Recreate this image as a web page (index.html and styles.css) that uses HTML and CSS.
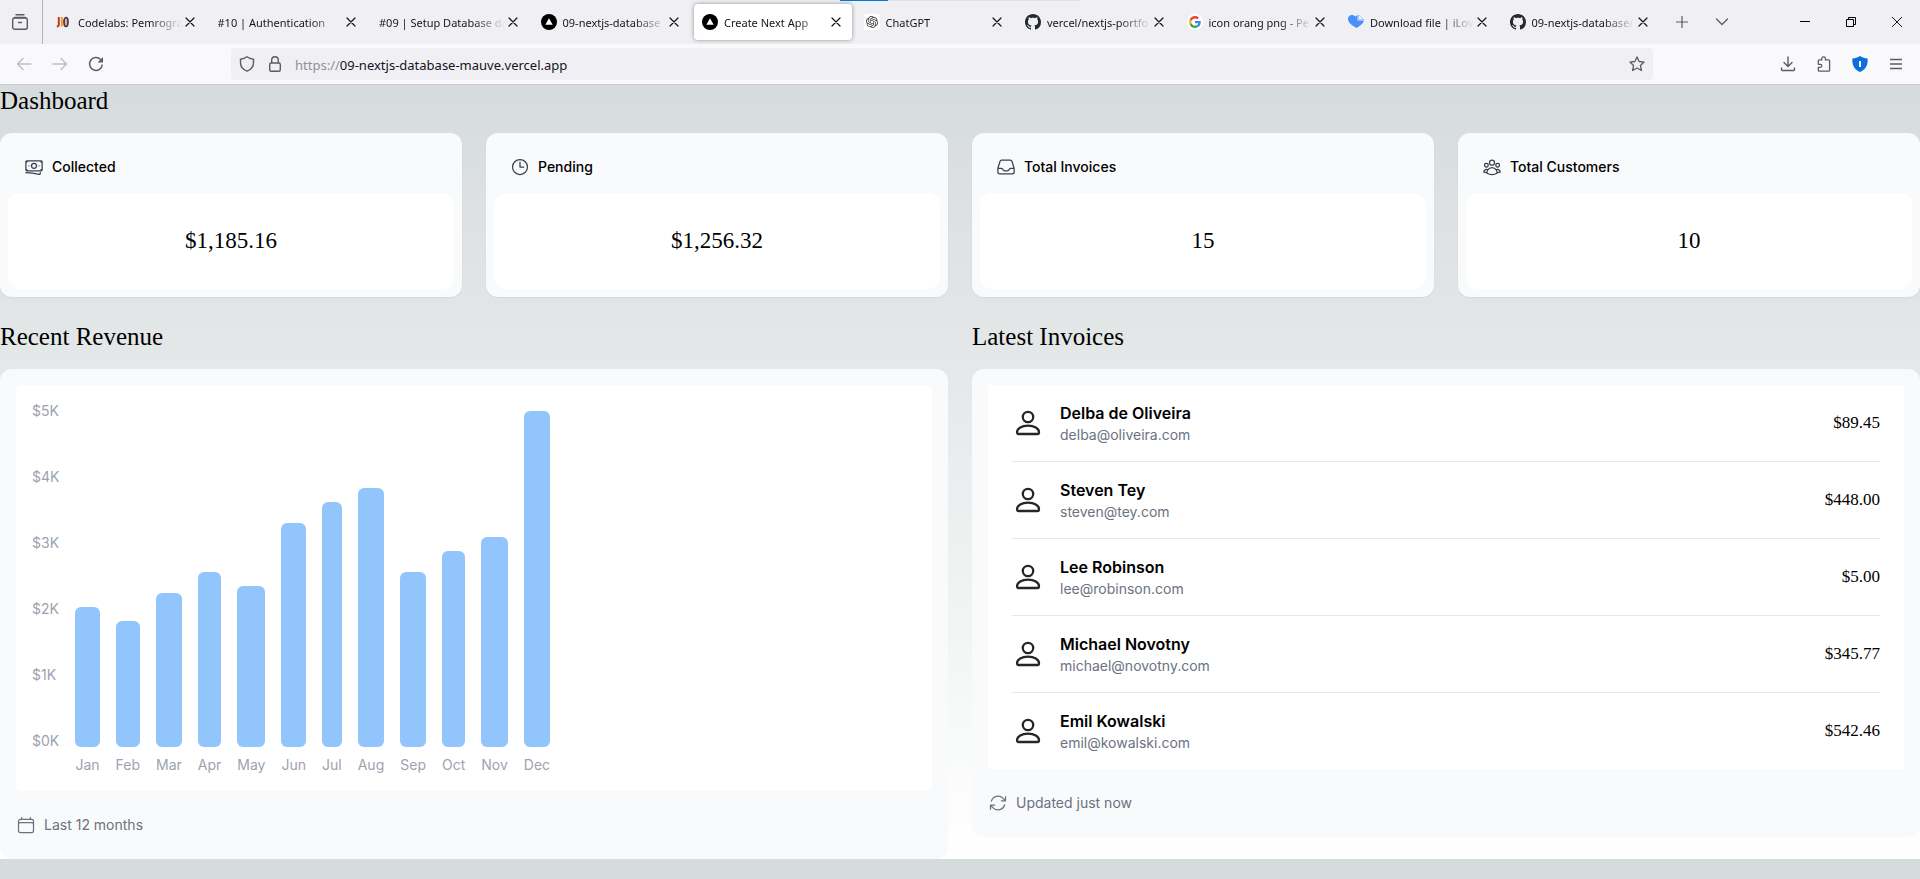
FILE: index.html
```html
<!DOCTYPE html>
<html lang="en">
<head>
<meta charset="utf-8">
<title>Create Next App</title>
<link rel="stylesheet" href="styles.css">
</head>
<body>
<svg class="sprite" aria-hidden="true">
  <symbol id="close" viewBox="0 0 16 16"><path d="M4 4l8 8M12 4l-8 8" fill="none" stroke="currentColor" stroke-width="1.2" stroke-linecap="round"/></symbol>
  <symbol id="vercel" viewBox="0 0 16 16"><circle cx="8" cy="8" r="8"/><path d="M8 4.2l3.7 6.5H4.3z" fill="#fff"/></symbol>
  <symbol id="github" viewBox="0 0 16 16"><path fill="#24292f" d="M8 0C3.58 0 0 3.58 0 8c0 3.54 2.29 6.53 5.47 7.59.4.07.55-.17.55-.38 0-.19-.01-.82-.01-1.49-2.01.37-2.53-.49-2.69-.94-.09-.23-.48-.94-.82-1.13-.28-.15-.68-.52-.01-.53.63-.01 1.08.58 1.23.82.72 1.21 1.87.87 2.33.66.07-.52.28-.87.51-1.07-1.78-.2-3.64-.89-3.64-3.95 0-.87.31-1.59.82-2.15-.08-.2-.36-1.02.08-2.12 0 0 .67-.21 2.2.82.64-.18 1.32-.27 2-.27s1.36.09 2 .27c1.53-1.04 2.2-.82 2.2-.82.44 1.1.16 1.92.08 2.12.51.56.82 1.27.82 2.15 0 3.07-1.87 3.75-3.65 3.95.29.25.54.73.54 1.48 0 1.07-.01 1.93-.01 2.2 0 .21.15.46.55.38A8.01 8.01 0 0 0 16 8c0-4.42-3.58-8-8-8Z"/></symbol>
  <symbol id="person" viewBox="0 0 32 32"><g fill="none" stroke="#262626" stroke-width="2.3"><circle cx="16" cy="10" r="5.2"/><path d="M5 25.300c0-3.900 4.800-6.700 11-6.700s11 2.800 11 6.700c0 1.200-.4 1.700-1.500 1.700h-19c-1.100 0-1.500-.5-1.500-1.700z"/></g></symbol>
</svg>

<header class="browser">
  <div class="tabbar">
    <button class="view" aria-label="Firefox View"><svg width="18" height="18" viewBox="0 0 18 18" fill="none" stroke="#5b5b66" stroke-width="1.4" stroke-linecap="round"><path d="M5 1.700h8M3.500 4.500h11"/><rect x="1.700" y="5" width="14.600" height="11.300" rx="2"/><path d="M7.500 9.500h3"/></svg></button>
    <nav class="tabs" aria-label="Tabs">
      <div class="tab"><svg class="fav" viewBox="0 0 16 16"><path d="M2.800 3v7.500q0 2-2 2" fill="none" stroke="#c0392b" stroke-width="2"/><path d="M5.800 3v9.500" stroke="#f39c12" stroke-width="2"/><ellipse cx="10" cy="8" rx="2" ry="4.500" fill="#f2b25c" stroke="#34336b" stroke-width="1.700"/></svg><button class="title">Codelabs: Pemrogra</button><button class="x" aria-label="Close tab"><svg><use href="#close"/></svg></button></div>
      <div class="tab"><button class="title">#10 | Authentication</button><button class="x" aria-label="Close tab"><svg><use href="#close"/></svg></button></div>
      <div class="tab"><button class="title">#09 | Setup Database da</button><button class="x" aria-label="Close tab"><svg><use href="#close"/></svg></button></div>
      <div class="tab"><svg class="fav"><use href="#vercel"/></svg><button class="title">09-nextjs-database</button><button class="x" aria-label="Close tab"><svg><use href="#close"/></svg></button></div>
      <div class="tab active"><svg class="fav"><use href="#vercel"/></svg><button class="title">Create Next App</button><button class="x" aria-label="Close tab"><svg><use href="#close"/></svg></button></div>
      <div class="tab"><svg class="fav" viewBox="-2 -2 28 28"><rect x="-2" y="-2" width="28" height="28" rx="5" fill="#fff"/><path transform="translate(1.500 1.500) scale(.875)" fill="#333" d="M22.282 9.821a5.985 5.985 0 0 0-.516-4.911 6.046 6.046 0 0 0-6.510-2.900A6.065 6.065 0 0 0 4.981 4.182a5.985 5.985 0 0 0-3.998 2.900 6.046 6.046 0 0 0 .743 7.097 5.980 5.980 0 0 0 .511 4.911 6.051 6.051 0 0 0 6.515 2.900A5.985 5.985 0 0 0 13.260 24a6.056 6.056 0 0 0 5.772-4.206 5.989 5.989 0 0 0 3.998-2.900 6.056 6.056 0 0 0-.748-7.073zm-9.022 12.608a4.476 4.476 0 0 1-2.876-1.041l.142-.080 4.778-2.758a.795.795 0 0 0 .393-.681v-6.737l2.020 1.169a.071.071 0 0 1 .038.052v5.583a4.504 4.504 0 0 1-4.495 4.494zm-9.661-4.125a4.471 4.471 0 0 1-.535-3.014l.142.085 4.783 2.758a.771.771 0 0 0 .781 0l5.843-3.369v2.332a.080.080 0 0 1-.033.062L9.740 19.950a4.499 4.499 0 0 1-6.141-1.646zM2.341 7.896a4.485 4.485 0 0 1 2.366-1.973V11.600a.766.766 0 0 0 .388.677l5.814 3.354-2.020 1.169a.076.076 0 0 1-.071 0l-4.830-2.787A4.504 4.504 0 0 1 2.341 7.872zm16.596 3.856L13.104 8.364 15.119 7.200a.076.076 0 0 1 .071 0l4.830 2.791a4.494 4.494 0 0 1-.677 8.104v-5.677a.790.790 0 0 0-.407-.667zm2.011-3.023l-.142-.085-4.774-2.782a.776.776 0 0 0-.785 0L9.409 9.230V6.897a.066.066 0 0 1 .028-.062l4.830-2.787a4.499 4.499 0 0 1 6.680 4.660zM8.307 12.863l-2.020-1.164a.080.080 0 0 1-.038-.057V6.074a4.499 4.499 0 0 1 7.376-3.454l-.142.081L8.704 5.459a.795.795 0 0 0-.393.681zm1.098-2.365l2.602-1.500 2.607 1.500v2.999l-2.597 1.500-2.607-1.500Z"/></svg><button class="title">ChatGPT</button><button class="x" aria-label="Close tab"><svg><use href="#close"/></svg></button></div>
      <div class="tab"><svg class="fav"><use href="#github"/></svg><button class="title">vercel/nextjs-portfo</button><button class="x" aria-label="Close tab"><svg><use href="#close"/></svg></button></div>
      <div class="tab"><svg class="fav" viewBox="0 0 64 64"><circle cx="32" cy="32" r="32" fill="#fff"/><g transform="translate(8 8)"><path fill="#EA4335" d="M24 9.500c3.540 0 6.710 1.220 9.210 3.600l6.850-6.850C35.900 2.380 30.470 0 24 0 14.620 0 6.510 5.380 2.560 13.220l7.980 6.190C12.430 13.720 17.740 9.500 24 9.500z"/><path fill="#4285F4" d="M46.980 24.550c0-1.570-.15-3.090-.38-4.550H24v9.020h12.940c-.58 2.960-2.260 5.480-4.780 7.180l7.730 6c4.510-4.180 7.090-10.360 7.090-17.650z"/><path fill="#FBBC05" d="M10.530 28.590c-.48-1.450-.76-2.990-.76-4.590s.27-3.140.76-4.590l-7.980-6.190C.92 16.460 0 20.120 0 24c0 3.880.92 7.540 2.560 10.780l7.970-6.190z"/><path fill="#34A853" d="M24 48c6.480 0 11.930-2.130 15.890-5.810l-7.730-6c-2.150 1.450-4.920 2.300-8.160 2.300-6.260 0-11.570-4.220-13.470-9.910l-7.980 6.190C6.510 42.620 14.620 48 24 48z"/></g></svg><button class="title">icon orang png - Pe</button><button class="x" aria-label="Close tab"><svg><use href="#close"/></svg></button></div>
      <div class="tab"><svg class="fav" viewBox="0 0 16 16"><path d="M0 5C0 1 4.500-.5 7.500 2.500L9.500 1v5.500H16c-.5 2.500-4 5.500-7.500 7.500C4 11.500 0 8.500 0 5z" fill="#4a8ffa"/><path d="M10.500 1l5 4.500h-5z" fill="#fff" stroke="#7fb0ff" stroke-width=".7"/></svg><button class="title">Download file | iLov</button><button class="x" aria-label="Close tab"><svg><use href="#close"/></svg></button></div>
      <div class="tab"><svg class="fav"><use href="#github"/></svg><button class="title">09-nextjs-database/</button><button class="x" aria-label="Close tab"><svg><use href="#close"/></svg></button></div>
    </nav>
    <div class="tabtools">
      <button aria-label="New tab"><svg width="16" height="16" viewBox="0 0 16 16" fill="none" stroke="#5b5b66" stroke-width="1.200"><path d="M8 2v12M2 8h12"/></svg></button>
      <button aria-label="List all tabs"><svg width="16" height="16" viewBox="0 0 16 16" fill="none" stroke="#5b5b66" stroke-width="1.300" stroke-linecap="round"><path d="M2.500 5l5.500 5.500L13.500 5"/></svg></button>
    </div>
    <div class="windowtools">
      <button aria-label="Minimize"><svg width="10" height="10" viewBox="0 0 10 10" fill="none" stroke="#000"><path d="M0 4.500h10"/></svg></button>
      <button aria-label="Restore"><svg width="10" height="10" viewBox="0 0 10 10" fill="none" stroke="#000"><path d="M.5 2.500h7v7h-7zM2.500 2.500v-2h7v7h-2"/></svg></button>
      <button aria-label="Close"><svg width="10" height="10" viewBox="0 0 10 10" fill="none" stroke="#000" stroke-width=".9"><path d="M0 0l10 10M10 0L0 10"/></svg></button>
    </div>
    <div class="loadline"></div>
  </div>

  <div class="toolbar">
    <div class="history">
      <button aria-label="Back" disabled><svg width="16" height="16" viewBox="0 0 16 16" fill="none" stroke="#bdbdc4" stroke-width="1.400" stroke-linecap="round" stroke-linejoin="round"><path d="M15 8H1.500M7 2.500L1.500 8 7 13.500"/></svg></button>
      <button aria-label="Forward" disabled><svg width="16" height="16" viewBox="0 0 16 16" fill="none" stroke="#bdbdc4" stroke-width="1.400" stroke-linecap="round" stroke-linejoin="round"><path d="M1 8h13.500M9 2.500L14.500 8 9 13.500"/></svg></button>
      <button aria-label="Reload"><svg width="16" height="16" viewBox="0 0 16 16" fill="none" stroke="#5b5b66" stroke-width="1.500"><path d="M14.300 8.500A6.400 6.400 0 1 1 12.600 3.600"/><path d="M15 1v5.500H9.500z" fill="#5b5b66" stroke="none"/></svg></button>
    </div>
    <div class="urlbar">
      <svg width="16" height="16" viewBox="0 0 16 16" fill="none" stroke="#5b5b66" stroke-width="1.400" stroke-linejoin="round"><path d="M8 .8c2 1.500 4.500 2.200 6.500 2.400v3.300c0 4-2.500 7.200-6.500 8.700-4-1.500-6.500-4.700-6.500-8.700V3.200C3.500 3 6 2.300 8 .8z"/></svg>
      <svg width="16" height="16" viewBox="0 0 16 16" fill="none" stroke="#5b5b66" stroke-width="1.400"><rect x="2.700" y="7" width="10.600" height="8.300" rx="1.500"/><path d="M4.700 7V4a3.300 3.300 0 0 1 6.600 0v3"/></svg>
      <label class="address"><span>https://</span><input type="text" value="09-nextjs-database-mauve.vercel.app" aria-label="Address"></label>
      <button aria-label="Bookmark"><svg width="16" height="16" viewBox="0 0 16 16" fill="none" stroke="#5b5b66" stroke-width="1.300" stroke-linejoin="round"><path d="M8 .9l2.100 4.600 5 .6-3.700 3.400 1 5L8 12l-4.400 2.500 1-5L.9 6.100l5-.6z"/></svg></button>
    </div>
    <div class="extras">
      <button aria-label="Downloads"><svg width="16" height="16" viewBox="0 0 16 16" fill="none" stroke="#5b5b66" stroke-width="1.400" stroke-linecap="round" stroke-linejoin="round"><path d="M8 1v9M4 6.500L8 10.500l4-4M1.500 12v1.500q0 1 1 1h11q1 0 1-1V12"/></svg></button>
      <button aria-label="Extensions"><svg width="16" height="16" viewBox="0 0 16 16" fill="none" stroke="#5b5b66" stroke-width="1.300" stroke-linejoin="round"><path d="M2.300 7V4.800q0-.9.900-.9h2.600V2.600a1.800 1.800 0 0 1 3.600 0v1.300h3.200q1 0 1 1v9.300q0 1-1 1H3.200q-.9 0-.9-.9v-3h2a1.500 1.500 0 0 0 0-3H2.300z"/></svg></button>
      <button aria-label="Bitwarden"><svg width="16" height="16" viewBox="0 0 16 16"><path d="M8 0c2.500 1.700 5 2 7.500 2.500C16.500 9 13 14 8 16 3 14-.5 9 .5 2.500 3 2 5.500 1.700 8 0z" fill="#0c6fde"/><path d="M7 5h2v6H7z" fill="#fff"/></svg></button>
      <button aria-label="Menu"><svg width="16" height="16" viewBox="0 0 16 16" fill="none" stroke="#5b5b66" stroke-width="1.300"><path d="M2 3.500h12M2 8h12M2 12.500h12"/></svg></button>
    </div>
  </div>
</header>

<main class="page">
  <h1 class="heading">Dashboard</h1>
  <section class="cards">
    <article class="card">
      <div class="cardhead"><svg class="icon" viewBox="0 0 24 24"><path d="M2.250 18.750a60.070 60.070 0 0 1 15.797 2.101c.727.198 1.453-.342 1.453-1.096V18.750M3.750 4.500v.75A.75.75 0 0 1 3 6h-.75m0 0v-.375c0-.621.504-1.125 1.125-1.125H20.250M2.250 6v9m18-10.500v.75c0 .414.336.75.75.75h.75m-1.500-1.500h.375c.621 0 1.125.504 1.125 1.125v9.750c0 .621-.504 1.125-1.125 1.125h-.375m1.500-1.500H21a.75.75 0 0 0-.75.75v.75m0 0H3.750m0 0h-.375a1.125 1.125 0 0 1-1.125-1.125V15m1.500 1.500v-.75A.75.75 0 0 0 3 15h-.75M15 10.500a3 3 0 1 1-6 0 3 3 0 0 1 6 0Zm3 0h.008v.008H18V10.500Zm-12 0h.008v.008H6V10.500Z"/></svg><h3>Collected</h3></div>
      <p class="value">$1,185.16</p>
    </article>
    <article class="card">
      <div class="cardhead"><svg class="icon" viewBox="0 0 24 24"><path d="M12 6v6h4.500m4.500 0a9 9 0 1 1-18 0 9 9 0 0 1 18 0Z"/></svg><h3>Pending</h3></div>
      <p class="value">$1,256.32</p>
    </article>
    <article class="card">
      <div class="cardhead"><svg class="icon" viewBox="0 0 24 24"><path d="M2.250 13.500h3.860a2.250 2.250 0 0 1 2.012 1.244l.256.512a2.250 2.250 0 0 0 2.013 1.244h3.218a2.250 2.250 0 0 0 2.013-1.244l.256-.512a2.250 2.250 0 0 1 2.013-1.244h3.859m-19.500.338V18a2.250 2.250 0 0 0 2.250 2.250h15A2.250 2.250 0 0 0 21.750 18v-4.162c0-.224-.034-.447-.1-.661L19.240 5.338a2.250 2.250 0 0 0-2.150-1.588H6.911a2.250 2.250 0 0 0-2.150 1.588L2.350 13.177a2.250 2.250 0 0 0-.1.661Z"/></svg><h3>Total Invoices</h3></div>
      <p class="value">15</p>
    </article>
    <article class="card">
      <div class="cardhead"><svg class="icon" viewBox="0 0 24 24"><path d="M18 18.720a9.094 9.094 0 0 0 3.741-.479 3 3 0 0 0-4.682-2.720m.94 3.198.001.031c0 .225-.012.447-.037.666A11.944 11.944 0 0 1 12 21c-2.170 0-4.207-.576-5.963-1.584A6.062 6.062 0 0 1 6 18.719m12 0a5.971 5.971 0 0 0-.941-3.197m0 0A5.995 5.995 0 0 0 12 12.750a5.995 5.995 0 0 0-5.058 2.772m0 0a3 3 0 0 0-4.681 2.720 8.986 8.986 0 0 0 3.740.477m.94-3.197a5.971 5.971 0 0 0-.94 3.197M15 6.750a3 3 0 1 1-6 0 3 3 0 0 1 6 0Zm6 3a2.250 2.250 0 1 1-4.500 0 2.250 2.250 0 0 1 4.500 0Zm-13.500 0a2.250 2.250 0 1 1-4.500 0 2.250 2.250 0 0 1 4.500 0Z"/></svg><h3>Total Customers</h3></div>
      <p class="value">10</p>
    </article>
  </section>

  <div class="columns">
    <section>
      <h2 class="heading">Recent Revenue</h2>
      <div class="panel">
        <div class="chart">
          <div class="axis"><span>$5K</span><span>$4K</span><span>$3K</span><span>$2K</span><span>$1K</span><span>$0K</span></div>
          <div class="month"><div class="bar" style="height:140px"></div><span>Jan</span></div>
          <div class="month"><div class="bar" style="height:126px"></div><span>Feb</span></div>
          <div class="month"><div class="bar" style="height:154px"></div><span>Mar</span></div>
          <div class="month"><div class="bar" style="height:175px"></div><span>Apr</span></div>
          <div class="month"><div class="bar" style="height:161px"></div><span>May</span></div>
          <div class="month"><div class="bar" style="height:224px"></div><span>Jun</span></div>
          <div class="month"><div class="bar" style="height:245px"></div><span>Jul</span></div>
          <div class="month"><div class="bar" style="height:259px"></div><span>Aug</span></div>
          <div class="month"><div class="bar" style="height:175px"></div><span>Sep</span></div>
          <div class="month"><div class="bar" style="height:196px"></div><span>Oct</span></div>
          <div class="month"><div class="bar" style="height:210px"></div><span>Nov</span></div>
          <div class="month"><div class="bar" style="height:336px"></div><span>Dec</span></div>
        </div>
        <div class="note"><svg class="icon" viewBox="0 0 24 24"><path d="M6.750 3v2.250M17.250 3v2.250M3 18.750V7.500a2.250 2.250 0 0 1 2.250-2.250h13.500A2.250 2.250 0 0 1 21 7.500v11.250m-18 0A2.250 2.250 0 0 0 5.250 21h13.500A2.250 2.250 0 0 0 21 18.750m-18 0v-7.500A2.250 2.250 0 0 1 5.250 9h13.500A2.250 2.250 0 0 1 21 11.250v7.500"/></svg><p>Last 12 months</p></div>
      </div>
    </section>
    <section>
      <h2 class="heading">Latest Invoices</h2>
      <div class="panel">
        <ul class="invoices">
          <li><svg class="avatar"><use href="#person"/></svg><div class="who"><p class="name">Delba de Oliveira</p><p class="email">delba@oliveira.com</p></div><p class="amount">$89.45</p></li>
          <li><svg class="avatar"><use href="#person"/></svg><div class="who"><p class="name">Steven Tey</p><p class="email">steven@tey.com</p></div><p class="amount">$448.00</p></li>
          <li><svg class="avatar"><use href="#person"/></svg><div class="who"><p class="name">Lee Robinson</p><p class="email">lee@robinson.com</p></div><p class="amount">$5.00</p></li>
          <li><svg class="avatar"><use href="#person"/></svg><div class="who"><p class="name">Michael Novotny</p><p class="email">michael@novotny.com</p></div><p class="amount">$345.77</p></li>
          <li><svg class="avatar"><use href="#person"/></svg><div class="who"><p class="name">Emil Kowalski</p><p class="email">emil@kowalski.com</p></div><p class="amount">$542.46</p></li>
        </ul>
        <div class="note"><svg class="icon" viewBox="0 0 24 24"><path d="M16.023 9.348h4.992v-.001M2.985 19.644v-4.992m0 0h4.992m-4.993 0 3.181 3.183a8.250 8.250 0 0 0 13.803-3.700M4.031 9.865a8.250 8.250 0 0 1 13.803-3.700l3.181 3.182m0-4.991v4.990"/></svg><p>Updated just now</p></div>
      </div>
    </section>
  </div>
</main>
</body>
</html>
```

FILE: styles.css
```css
* { box-sizing: border-box; margin: 0; padding: 0; }
body { background: #d6dbdc; font-family: Inter, "Liberation Sans", sans-serif; font-size: 14px; line-height: 20px; color: #000; }
button, input { font: inherit; color: inherit; background: none; border: 0; outline: 0; }
svg { display: block; flex: none; }
.sprite { position: absolute; width: 0; height: 0; }

/* Browser window */
.browser { font-family: "Noto Sans", "Open Sans", sans-serif; color: #15141a; background: #f9f9fb; border-bottom: 1px solid #c8c8cb; }
.tabbar { position: relative; display: flex; height: 44px; background: #f0f0f4; }
.view { width: 43px; padding-left: 11px; border-right: 1px solid #b4b4b9; }
.tabs { flex: 1; min-width: 0; display: flex; padding: 4px 0 4px 3px; }
.tab { flex: 1 1 0; min-width: 0; display: flex; align-items: center; margin: 0 2px; padding: 0 8px; border-radius: 4px; }
.active { background: #fff; box-shadow: 0 0 4px rgba(0, 0, 0, .4); }
.fav { width: 16px; height: 16px; margin-right: 6px; }
.title { flex: 1; min-width: 0; overflow: hidden; white-space: nowrap; text-align: left; font-size: 11px; line-height: 20px; padding-top: 2px; mask-image: linear-gradient(to left, transparent, #000 32px); }
.x { width: 16px; height: 16px; }
.x svg { width: 16px; height: 16px; }
.tabtools { display: flex; width: 121px; padding-left: 1px; }
.tabtools button { display: grid; place-items: center; width: 40px; }
.windowtools { display: flex; }
.windowtools button { display: grid; place-items: center; width: 46px; }
.loadline { position: absolute; top: 0; left: 43.75%; width: 12.5%; height: 1px; background: linear-gradient(to right, #0078d7 20%, #e0e0e2 20%); }

.toolbar { display: flex; align-items: center; height: 40px; padding: 0 10px; }
.history { display: flex; gap: 20px; padding-left: 6px; width: 221px; }
.urlbar { flex: 1; display: flex; align-items: center; gap: 12px; height: 32px; padding: 0 8px; background: #f0f0f4; border-radius: 4px; }
.address { flex: 1; display: flex; font-size: 13px; padding-top: 2px; }
.address span { color: #8f8f98; }
.address input { flex: 1; min-width: 0; }
.extras { display: flex; gap: 20px; width: 257px; justify-content: flex-end; padding-right: 6px; }

/* Dashboard */
.page { background: linear-gradient(to bottom, #d6dbdc, #fff); }
.heading { font-family: "Liberation Serif", serif; font-weight: 400; font-size: 25px; line-height: 32px; margin-bottom: 16px; }
.cards { display: grid; grid-template-columns: repeat(4, minmax(0, 1fr)); gap: 24px; }
.card { padding: 8px; background: #f9fafb; border-radius: 12px; box-shadow: 0 1px 2px rgba(0, 0, 0, .05); }
.cardhead { display: flex; gap: 8px; padding: 16px; }
.cardhead h3 { font-size: 14px; font-weight: 500; }
.icon { width: 20px; height: 20px; fill: none; stroke: #374151; stroke-width: 1.5; stroke-linecap: round; stroke-linejoin: round; }
.value { padding: 32px 16px; background: #fff; border-radius: 12px; text-align: center; font-family: "Liberation Serif", serif; font-size: 23px; line-height: 32px; }
.columns { display: grid; grid-template-columns: repeat(2, minmax(0, 1fr)); gap: 24px; align-items: start; margin-top: 24px; }
.panel { padding: 16px; background: #f9fafb; border-radius: 12px; }
.chart { display: flex; align-items: flex-end; gap: 16px; padding: 16px; background: #fff; border-radius: 6px; color: #9ca3af; }
.axis { display: flex; flex-direction: column; justify-content: space-between; height: 350px; margin-bottom: 24px; }
.month { display: flex; flex-direction: column; gap: 8px; }
.bar { background: #93c5fd; border-radius: 6px; }
.note { display: flex; gap: 8px; padding: 24px 0 8px; color: #6b7280; }
.note .icon { stroke: #6b7280; }
.invoices { list-style: none; padding: 0 24px; background: #fff; }
.invoices li { display: flex; align-items: center; gap: 16px; padding: 16px 0; }
.invoices li + li { border-top: 1px solid #e5e7eb; }
.avatar { width: 32px; height: 32px; }
.who { flex: 1; min-width: 0; }
.name { font-size: 16px; line-height: 24px; font-weight: 600; }
.email { color: #6b7280; }
.amount { font-family: "Liberation Serif", serif; font-size: 17px; line-height: 24px; }
```
